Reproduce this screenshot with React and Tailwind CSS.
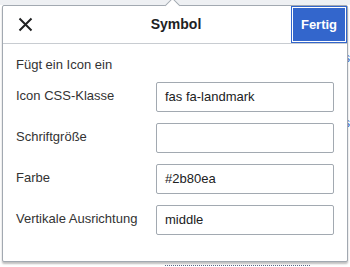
import React from 'react';

const rows = [
  { label: 'Icon CSS-Klasse', value: 'fas fa-landmark' },
  { label: 'Schriftgröße', value: '' },
  { label: 'Farbe', value: '#2b80ea' },
  { label: 'Vertikale Ausrichtung', value: 'middle' },
];

export default function App() {
  return (
    <div
      className="relative w-[350px] h-[267px] overflow-hidden bg-white"
      style={{ fontFamily: '"Liberation Sans", Arial, sans-serif' }}
    >
      {/* page behind the popup */}
      <div className="h-[5px] bg-[#eef0f3]" />
      <div className="absolute right-0 top-[52px] text-[12px] leading-none text-[#3366cc]">s</div>
      <div className="absolute right-0 top-[117px] text-[12px] leading-none text-[#3366cc]">s</div>
      <div className="absolute left-[165px] top-[262px] w-[145px] h-[4px] border-b border-dotted border-[#5a6a8a]" />

      {/* popup */}
      <div className="relative ml-[2px] w-[346px] h-[257px] bg-white border border-[#a2a9b1] rounded-[2px] shadow-[0_2px_2px_rgba(0,0,0,0.25)] text-[#202122]">
        {/* caret */}
        <div className="absolute left-[164px] -top-[6px] w-[11px] h-[11px] rotate-45 bg-white border-l border-t border-[#a2a9b1]" />

        {/* header */}
        <div className="relative flex items-center h-[38px] border-b border-[#c8ccd1]">
          <button className="w-[44px] h-full flex items-center justify-center">
            <svg width="15" height="15" viewBox="0 0 15 15">
              <path d="M1.5 1.5 L13.5 13.5 M13.5 1.5 L1.5 13.5" stroke="#202122" strokeWidth="2" />
            </svg>
          </button>
          <div className="flex-1 text-center text-[14px] font-bold pl-[14px]">Symbol</div>
          <button className="h-full w-[56px] bg-[#3366cc] border border-[#3366cc] shadow-[inset_0_0_0_1px_#fff] text-white text-[13px] font-bold">
            Fertig
          </button>
        </div>

        {/* body */}
        <div className="pl-[13px] pr-[12px] pt-[12px]">
          <div className="text-[13px] leading-[17px] mb-[9px] text-[#333]">Fügt ein Icon ein</div>
          <div className="flex flex-col gap-[11px]">
            {rows.map((r) => (
              <div key={r.label} className="flex items-center">
                <div className="w-[140px] text-[13px] text-[#333] -mt-[2px]">{r.label}</div>
                <div className="w-[178px] h-[30px] border border-[#a2a9b1] rounded-[2px] flex items-center pl-[8px] text-[13px] text-[#202122]">
                  {r.value}
                </div>
              </div>
            ))}
          </div>
        </div>
      </div>
    </div>
  );
}
